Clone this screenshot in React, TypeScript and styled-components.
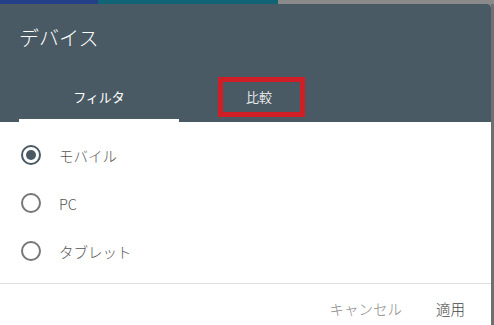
import styled, { createGlobalStyle } from "styled-components"

const GlobalStyle = createGlobalStyle`
  html, body {
    margin: 0;
    padding: 0;
    background: #7d7d7d;
    font-family: "Noto Sans CJK JP", "Noto Sans", Roboto, sans-serif;
    overflow: hidden;
  }
`

const Page = styled.div`
  width: 494px;
  height: 325px;
  display: flex;
  flex-direction: column;
`

const Backdrop = styled.div`
  height: 4px;
  display: flex;
  flex-shrink: 0;
`

const Segment = styled.div<{ $color: string; $width: number }>`
  width: ${(p) => p.$width}px;
  background: ${(p) => p.$color};
`

const Stage = styled.div`
  flex: 1;
  display: flex;
`

const Dialog = styled.div`
  width: 491px;
  display: flex;
  flex-direction: column;
  background: #ffffff;
  border-top-right-radius: 4px;
  overflow: hidden;
`

const Side = styled.div`
  flex: 1;
  background: #6f6f6f;
`

const Header = styled.div`
  background: #4a5a64;
  padding: 19px 0 0 19px;
  display: flex;
  flex-direction: column;
`

const Title = styled.div`
  color: #ffffff;
  font-size: 20px;
  font-weight: 300;
  line-height: 30px;
  height: 30px;
`

const Tabs = styled.div`
  display: flex;
  margin-top: 21px;
`

const Tab = styled.div<{ $active?: boolean }>`
  width: 160px;
  height: 48px;
  display: flex;
  align-items: center;
  justify-content: center;
  position: relative;
  color: #ffffff;
  font-size: 13px;
  box-sizing: border-box;
  border-bottom: 3px solid ${(p) => (p.$active ? "#ffffff" : "transparent")};
  opacity: ${(p) => (p.$active ? 1 : 0.85)};
`

const Mark = styled.div`
  position: absolute;
  left: 39px;
  top: 3px;
  width: 87px;
  height: 40px;
  box-sizing: border-box;
  border: 5px solid #e8141c;
`

const Options = styled.div`
  display: flex;
  flex-direction: column;
  padding-top: 9px;
  height: 162px;
  box-sizing: border-box;
  border-bottom: 1px solid #e0e0e0;
`

const Option = styled.label`
  display: flex;
  align-items: center;
  height: 48px;
  padding-left: 21px;
  gap: 18px;
  font-size: 14.5px;
  font-weight: 300;
  color: #555555;
`

const Radio = styled.span<{ $checked?: boolean }>`
  width: 20px;
  height: 20px;
  box-sizing: border-box;
  border-radius: 50%;
  border: 2px solid ${(p) => (p.$checked ? "#4a5a64" : "#777777")};
  display: flex;
  align-items: center;
  justify-content: center;

  &::after {
    content: "";
    width: 10px;
    height: 10px;
    border-radius: 50%;
    background: ${(p) => (p.$checked ? "#4a5a64" : "transparent")};
  }
`

const Footer = styled.div`
  flex: 1;
  display: flex;
  justify-content: flex-end;
  align-items: center;
  gap: 34px;
  padding: 8px 26px 0 0;
`

const Button = styled.button<{ $primary?: boolean }>`
  background: none;
  border: none;
  padding: 0;
  font-family: inherit;
  font-size: 14.5px;
  font-weight: 300;
  color: ${(p) => (p.$primary ? "#444444" : "#8a8a8a")};
`

const options = [
  { label: "モバイル", checked: true },
  { label: "PC", checked: false },
  { label: "タブレット", checked: false },
]

export default function App() {
  return (
    <>
      <GlobalStyle />
      <Page>
        <Backdrop>
          <Segment $color="#233f86" $width={98} />
          <Segment $color="#0f6575" $width={180} />
          <Segment $color="#8a8a8a" $width={216} />
        </Backdrop>
        <Stage>
          <Dialog>
            <Header>
              <Title>デバイス</Title>
              <Tabs>
                <Tab $active>フィルタ</Tab>
                <Tab>
                  比較
                  <Mark />
                </Tab>
              </Tabs>
            </Header>
            <Options>
              {options.map((o) => (
                <Option key={o.label}>
                  <Radio $checked={o.checked} />
                  {o.label}
                </Option>
              ))}
            </Options>
            <Footer>
              <Button>キャンセル</Button>
              <Button $primary>適用</Button>
            </Footer>
          </Dialog>
          <Side />
        </Stage>
      </Page>
    </>
  )
}
